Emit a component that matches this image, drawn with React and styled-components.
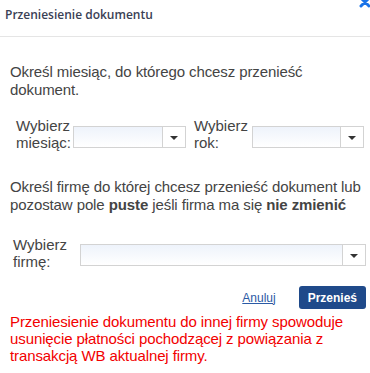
import React from 'react';
import styled, { createGlobalStyle } from 'styled-components';

const GlobalStyle = createGlobalStyle`
  body {
    margin: 0;
    background: #fff;
  }
`;

const Dialog = styled.div`
  width: 370px;
  height: 373px;
  position: relative;
  overflow: hidden;
  background: #fff;
`;

const Header = styled.div`
  height: 37px;
  border-bottom: 1px solid #e5e5e5;
  padding: 6px 5px 0;
  box-sizing: border-box;
`;

const Title = styled.div`
  font-family: "Open Sans", sans-serif;
  font-weight: 600;
  font-size: 12px;
  color: #3a4155;
  line-height: 17px;
`;

const Close = styled.button`
  position: absolute;
  top: -5px;
  right: -2px;
  border: 0;
  padding: 0;
  background: none;
  width: 14px;
  height: 14px;
  cursor: pointer;
`;

const Body = styled.div`
  padding: 26px 2px 0 10px;
  font-family: "Liberation Sans", Arial, sans-serif;
  font-size: 15px;
  line-height: 18px;
  color: #444;
`;

const Text = styled.p`
  margin: ${p => p.$m || '0'};
  color: ${p => (p.$warn ? '#f20000' : '#444')};
  line-height: ${p => (p.$warn ? '17px' : '18px')};
  letter-spacing: -0.1px;
`;

const Row = styled.div`
  display: flex;
  align-items: flex-start;
  margin: ${p => p.$m};
`;

const Field = styled.div`
  display: flex;
  align-items: flex-start;
  margin-left: ${p => p.$ml || '0'};
`;

const Label = styled.label`
  width: ${p => p.$w};
  padding-left: ${p => p.$pl || '0'};
  line-height: 17px;
  color: #444;
`;

const Select = styled.div`
  width: ${p => p.$w};
  height: 22px;
  margin-top: ${p => p.$mt || '0'};
  box-sizing: border-box;
  border: 1px solid #d3d3d3;
  background: linear-gradient(#eef3fb, #fff);
  display: flex;
  justify-content: flex-end;
`;

const Arrow = styled.div`
  width: 22px;
  border-left: 1px solid #d3d3d3;
  display: flex;
  align-items: center;
  justify-content: center;
  background: #fff;

  &::after {
    content: '';
    border-left: 4px solid transparent;
    border-right: 4px solid transparent;
    border-top: 4px solid #333;
    margin-top: 1px;
  }
`;

const Actions = styled.div`
  display: flex;
  justify-content: flex-end;
  align-items: center;
  gap: 23px;
  margin: 16px 2px 4px 0;
`;

const CancelLink = styled.a`
  font-family: "Liberation Sans", Arial, sans-serif;
  font-size: 12px;
  color: #2b5aa5;
  text-decoration: underline;
  cursor: pointer;
`;

const SubmitButton = styled.button`
  height: 23px;
  padding: 0 9px;
  border: 0;
  border-radius: 3px;
  background: #1f4a8a;
  color: #fff;
  font-family: "Liberation Sans", Arial, sans-serif;
  font-weight: bold;
  font-size: 12px;
`;

function App() {
  return (
    <>
      <GlobalStyle />
      <Dialog>
        <Header>
          <Title>Przeniesienie dokumentu</Title>
        </Header>
        <Close aria-label="Zamknij">
          <svg width="14" height="14" viewBox="0 0 14 14">
            <path d="M3 3 L11 11 M11 3 L3 11" stroke="#1a73e8" strokeWidth="3" strokeLinecap="round" />
          </svg>
        </Close>
        <Body>
          <Text>Określ miesiąc, do którego chcesz przenieść dokument.</Text>

          <Row $m="18px 0 0">
            <Field>
              <Label $w="57px" $pl="6px">Wybierz miesiąc:</Label>
              <Select $w="113px" $mt="9px"><Arrow /></Select>
            </Field>
            <Field $ml="8px">
              <Label $w="58px">Wybierz rok:</Label>
              <Select $w="112px" $mt="9px"><Arrow /></Select>
            </Field>
          </Row>

          <Text $m="27px 0 0">
            Określ firmę do której chcesz przenieść dokument lub pozostaw pole <b>puste</b> jeśli firma ma się <b>nie zmienić</b>
          </Text>

          <Row $m="22px 0 0">
            <Field>
              <Label $w="67px" $pl="3px">Wybierz firmę:</Label>
              <Select $w="286px" $mt="8px"><Arrow /></Select>
            </Field>
          </Row>

          <Actions>
            <CancelLink>Anuluj</CancelLink>
            <SubmitButton>Przenieś</SubmitButton>
          </Actions>

          <Text $warn>
            Przeniesienie dokumentu do innej firmy spowoduje usunięcie płatności pochodzącej z powiązania z transakcją WB aktualnej firmy.
          </Text>
        </Body>
      </Dialog>
    </>
  );
}

export default App;
